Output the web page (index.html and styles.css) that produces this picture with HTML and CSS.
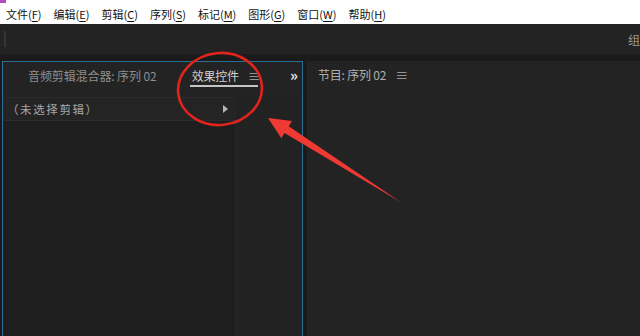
FILE: index.html
```html
<!DOCTYPE html>
<html lang="zh-CN">
<head>
    <meta charset="UTF-8">
    <title>Premiere</title>
    <link rel="stylesheet" href="styles.css">
</head>
<body>
<div class="menubar">
    <span class="appicon"></span>
    <ul>
        <li>文件(<u>F</u>)</li>
        <li>编辑(<u>E</u>)</li>
        <li>剪辑(<u>C</u>)</li>
        <li>序列(<u>S</u>)</li>
        <li>标记(<u>M</u>)</li>
        <li>图形(<u>G</u>)</li>
        <li>窗口(<u>W</u>)</li>
        <li>帮助(<u>H</u>)</li>
    </ul>
</div>
<div class="toolbar">
    <span class="grip"></span>
    <span class="ws">组</span>
</div>
<div class="workspace">
    <div class="panel left">
        <div class="tabs">
            <span class="tab">音频剪辑混合器: 序列 02</span>
            <span class="tab active">效果控件</span>
            <span class="menu">≡</span>
            <span class="more">»</span>
        </div>
        <div class="body">
            <div class="col-main">
                <div class="clip-row">
                    <span>（未选择剪辑）</span>
                    <span class="tri"></span>
                </div>
            </div>
            <div class="col-side"></div>
        </div>
    </div>
    <div class="panel right">
        <div class="tabs">
            <span class="tab">节目: 序列 02</span>
            <span class="menu">≡</span>
        </div>
    </div>
</div>
<!-- 标注：红圈和箭头 -->
<svg class="marks" width="640" height="336" viewBox="0 0 640 336">
    <ellipse cx="220" cy="89" rx="42" ry="36" transform="rotate(-6 220 89)" fill="none" stroke="#e0241e" stroke-width="2.6"/>
    <polygon points="268,118 292,121 288.7,126.3 402,203 284.5,133.1 281.3,138.2" fill="#ee3a33"/>
</svg>
</body>
</html>
```

FILE: styles.css
```css
*{
    margin: 0;
    padding: 0;
}
body{
    width: 640px;
    height: 336px;
    overflow: hidden;
    background: #1a1a1a;
    font-family: "Noto Sans CJK SC", "Noto Sans", sans-serif;
    position: relative;
}
ul{
    list-style: none;
}
.menubar{
    height: 24px;
    background: #fff;
    position: relative;
}
.appicon{
    position: absolute;
    left: 0;
    top: 0;
    width: 6px;
    height: 3px;
    background: #b04bc8;
}
.menubar ul{
    display: flex;
    padding: 5px 0 0 6px;
    gap: 12px;
}
.menubar li{
    font-size: 11px;
    line-height: 18px;
    color: #111;
    white-space: nowrap;
}
.menubar u{
    text-decoration-thickness: 1px;
    text-underline-offset: 2px;
}
.toolbar{
    height: 30px;
    background: #232323;
    display: flex;
    align-items: center;
    justify-content: space-between;
    border-bottom: 4px solid #1b1b1b;
}
.grip{
    width: 2px;
    height: 16px;
    margin-left: 4px;
    background: #353535;
}
.ws{
    font-size: 12px;
    color: #9a9a9a;
}
.workspace{
    display: flex;
    gap: 4px;
    padding: 3px 0 0 2px;
    height: 275px;
}
.panel{
    display: flex;
    flex-direction: column;
}
.left{
    width: 299px;
    flex-shrink: 0;
    border: 1px solid #2b6f95;
    border-bottom: none;
    background: #232323;
}
.right{
    flex: 1;
    background: #232323;
}
.tabs{
    height: 35px;
    display: flex;
    align-items: center;
    padding-bottom: 9px;
    box-sizing: border-box;
    white-space: nowrap;
}
.left .tabs{
    padding-left: 25px;
}
.right .tabs{
    padding-left: 11px;
}
.tab{
    font-size: 12px;
    color: #9c9c9c;
    flex-shrink: 0;
}
.left .tab{
    color: #8e8e8e;
    letter-spacing: -0.1px;
}
.left .tab.active{
    margin-left: 35px;
    color: #cfcfcf;
    letter-spacing: -0.2px;
    position: relative;
}
.tab.active::after{
    content: "";
    position: absolute;
    left: -2px;
    right: -19px;
    top: 18px;
    height: 2px;
    background: #c4c4c4;
}
.right .tab{
    color: #b0b0b0;
    letter-spacing: -0.2px;
}
.menu{
    font-size: 13px;
    color: #a8a8a8;
    margin-left: 9px;
}
.more{
    font-size: 15px;
    font-weight: bold;
    color: #e6e6e6;
    margin-left: auto;
    margin-right: 4px;
    line-height: 14px;
}
.body{
    flex: 1;
    display: flex;
}
.col-main{
    width: 232px;
    background: #1e1e1e;
    border-right: 1px solid #262626;
}
.col-side{
    flex: 1;
    background: #222;
}
.clip-row{
    height: 22px;
    display: flex;
    align-items: center;
    justify-content: space-between;
    padding: 0 7px 0 4px;
    background: #242424;
    border-top: 1px solid #2b2b2b;
    border-bottom: 1px solid #2b2b2b;
}
.clip-row span{
    font-size: 11.5px;
    color: #a4a4a4;
    letter-spacing: 1.6px;
}
.clip-row .tri{
    width: 0;
    height: 0;
    border-left: 5px solid #b4b4b4;
    border-top: 4px solid transparent;
    border-bottom: 4px solid transparent;
}
.marks{
    position: absolute;
    left: 0;
    top: 0;
}
```
